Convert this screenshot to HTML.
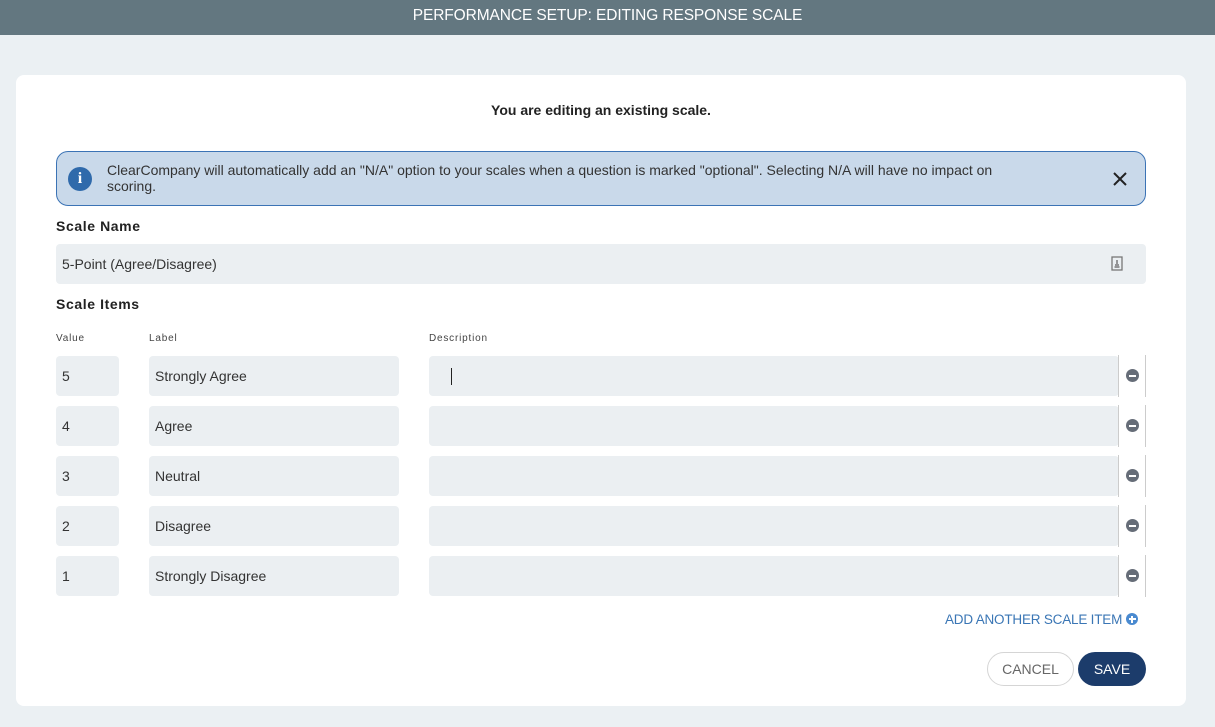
<!DOCTYPE html>
<html><head><meta charset="utf-8"><style>
*{box-sizing:border-box;margin:0;padding:0}
body{width:1215px;height:727px;background:#ebf0f3;font-family:"Liberation Sans",sans-serif;position:relative;overflow:hidden;color:#222}
.hdr{position:absolute;left:0;top:0;width:1215px;height:35px;background:#637780;color:#fff;font-size:15.5px;text-align:center;line-height:31px;letter-spacing:-.1px}
.card{position:absolute;left:16px;top:75px;width:1170px;height:631px;background:#fff;border-radius:8px}
.abs{position:absolute}
.title{left:0;width:1170px;top:27px;text-align:center;font-weight:bold;font-size:14px}
.info{left:40px;top:76px;width:1090px;height:55px;background:#c9d9ea;border:1px solid #3b73b5;border-radius:12px}
.info .ic{position:absolute;left:11px;top:15px;width:24px;height:24px;border-radius:50%;background:#2f6aab;color:#fff;font-weight:bold;font-family:"Liberation Serif",serif;font-size:16px;text-align:center;line-height:24px}
.info .t{position:absolute;left:50px;top:10px;font-size:14px;line-height:16px;color:#333;width:910px}
.lbl{font-weight:bold;font-size:14px;letter-spacing:.6px;color:#222}
.inp{background:#ebeff2;border-radius:4px;font-size:14px;color:#333;padding-left:6px;line-height:40px;height:40px}
.sm{font-size:10px;color:#444;letter-spacing:.8px}
.rm{width:28px;height:42px;border-left:1px solid #ccc;border-right:1px solid #ccc}
.rm i{position:absolute;left:7px;top:14px;width:13px;height:13px;border-radius:50%;background:#666d78}
.rm i:after{content:"";position:absolute;left:3px;top:5.5px;width:7px;height:2px;background:#fff}
</style></head><body>
<div class="hdr">PERFORMANCE SETUP: EDITING RESPONSE SCALE</div>
<div class="card">
<div class="abs title">You are editing an existing scale.</div>
<div class="abs info"><div class="ic">i</div><div class="t">ClearCompany will automatically add an "N/A" option to your scales when a question is marked "optional". Selecting N/A will have no impact on scoring.</div>
<svg class="abs" style="left:1055px;top:19px" width="16" height="16" viewBox="0 0 16 16"><path d="M2 2L14 14M14 2L2 14" stroke="#222" stroke-width="2"/></svg></div>
<div class="abs lbl" style="left:40px;top:143px">Scale Name</div>
<div class="abs inp" style="left:40px;top:169px;width:1090px">5-Point (Agree/Disagree)
<svg class="abs" style="left:1055px;top:12px" width="12" height="15" viewBox="0 0 12 15"><rect x="1" y="1" width="10" height="13" fill="none" stroke="#777" stroke-width="1.3"/><path d="M6 4v4M4 9h4M3.5 11h5" stroke="#777" stroke-width="1.5"/></svg></div>
<div class="abs lbl" style="left:40px;top:221px">Scale Items</div>
<div class="abs sm" style="left:40px;top:258px">Value</div>
<div class="abs sm" style="left:133px;top:258px">Label</div>
<div class="abs sm" style="left:413px;top:258px">Description</div>

<div class="abs inp" style="left:40px;top:281px;width:63px">5</div>
<div class="abs inp" style="left:133px;top:281px;width:250px">Strongly Agree</div>
<div class="abs inp" style="left:413px;top:281px;width:690px"><span style="position:absolute;left:22px;top:12px;width:1px;height:17px;background:#222"></span></div>
<div class="abs rm" style="left:1102px;top:280px"><i></i></div>

<div class="abs inp" style="left:40px;top:331px;width:63px">4</div>
<div class="abs inp" style="left:133px;top:331px;width:250px">Agree</div>
<div class="abs inp" style="left:413px;top:331px;width:690px"></div>
<div class="abs rm" style="left:1102px;top:330px"><i></i></div>

<div class="abs inp" style="left:40px;top:381px;width:63px">3</div>
<div class="abs inp" style="left:133px;top:381px;width:250px">Neutral</div>
<div class="abs inp" style="left:413px;top:381px;width:690px"></div>
<div class="abs rm" style="left:1102px;top:380px"><i></i></div>

<div class="abs inp" style="left:40px;top:431px;width:63px">2</div>
<div class="abs inp" style="left:133px;top:431px;width:250px">Disagree</div>
<div class="abs inp" style="left:413px;top:431px;width:690px"></div>
<div class="abs rm" style="left:1102px;top:430px"><i></i></div>

<div class="abs inp" style="left:40px;top:481px;width:63px">1</div>
<div class="abs inp" style="left:133px;top:481px;width:250px">Strongly Disagree</div>
<div class="abs inp" style="left:413px;top:481px;width:690px"></div>
<div class="abs rm" style="left:1102px;top:480px"><i></i></div>

<div class="abs" style="left:929px;top:537px;font-size:13.5px;color:#3a76b5;letter-spacing:-.2px;white-space:nowrap">ADD ANOTHER SCALE ITEM</div>
<div class="abs" style="left:1110px;top:538px;width:12px;height:12px;border-radius:50%;background:#4a8ad0"><span style="position:absolute;left:2.5px;top:5px;width:7px;height:2px;background:#fff"></span><span style="position:absolute;left:5px;top:2.5px;width:2px;height:7px;background:#fff"></span></div>
<div class="abs" style="left:971px;top:577px;width:87px;height:34px;border:1px solid #d5d5d5;border-radius:17px;text-align:center;line-height:32px;font-size:14px;color:#666">CANCEL</div>
<div class="abs" style="left:1062px;top:577px;width:68px;height:34px;background:#1c3c6b;border-radius:17px;text-align:center;line-height:34px;font-size:14px;color:#fff">SAVE</div>
</div>
</body></html>
